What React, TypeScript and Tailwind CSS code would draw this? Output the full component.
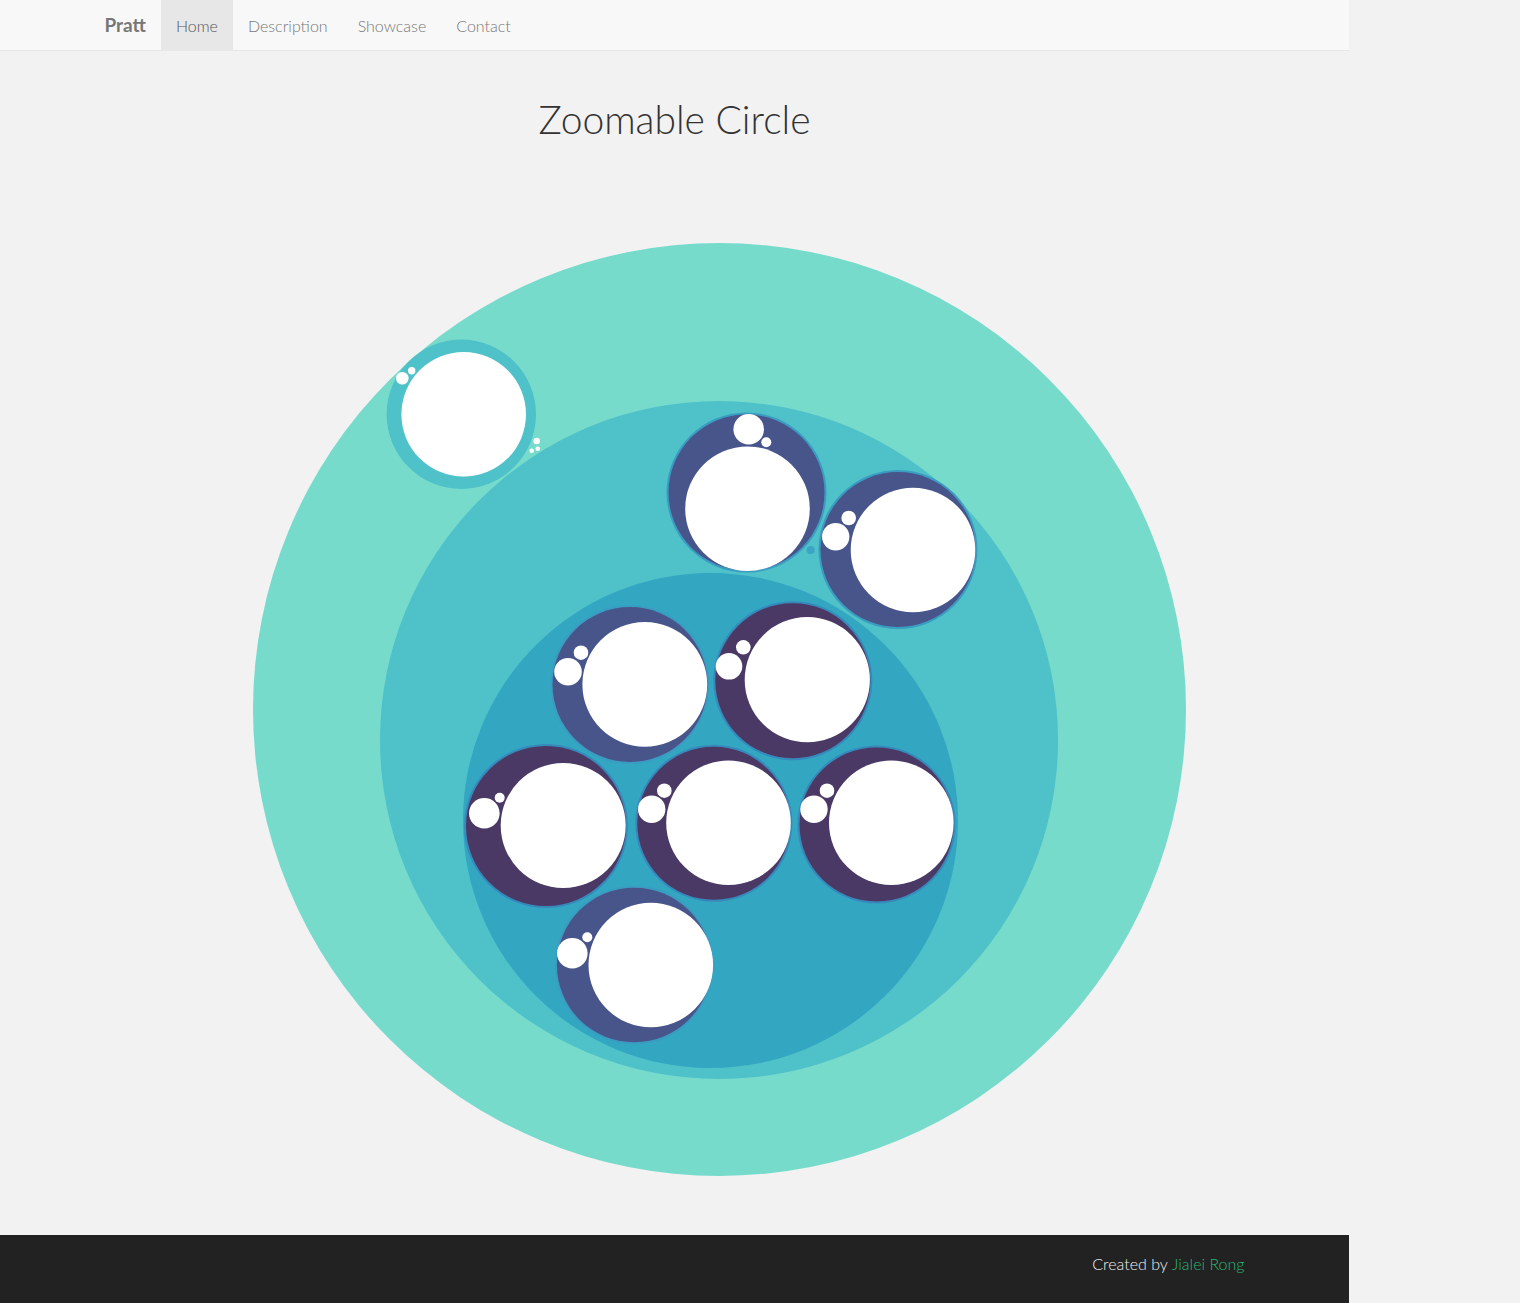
import React from "react";

type Dot = [number, number, number];
type Node = {
  c: [number, number];
  r: number;
  ring: number;
  fill: string;
  ringFill: string;
  dots: Dot[];
};

const NAVY = "#48558a";
const PURPLE = "#4a3965";
const RING_NAVY = "#3b9cc2";
const RING_PURPLE = "#3789bc";

const nodes: Node[] = [
  { c: [746.5, 492.5], r: 78, ring: 80, fill: NAVY, ringFill: RING_NAVY, dots: [[747.5, 508.7, 62.3], [748.7, 429.3, 15.3], [766.3, 442.3, 5]] },
  { c: [898, 549.5], r: 77.5, ring: 79.5, fill: NAVY, ringFill: RING_NAVY, dots: [[913, 550, 62.3], [835.7, 536.7, 13.7], [848.7, 518, 7.3]] },
  { c: [630, 684.5], r: 77.5, ring: 79.5, fill: NAVY, ringFill: RING_NAVY, dots: [[644.8, 684.4, 62.4], [568, 671.7, 13.8], [581, 652.7, 7.3]] },
  { c: [792.8, 680.7], r: 77.5, ring: 79.5, fill: PURPLE, ringFill: RING_PURPLE, dots: [[807.3, 679.7, 62.6], [729, 666.3, 13.3], [743.3, 647.3, 7.3]] },
  { c: [546, 826], r: 80, ring: 82, fill: PURPLE, ringFill: RING_PURPLE, dots: [[563.2, 825.5, 62.5], [484.3, 813.3, 15.3], [499.7, 797.7, 5]] },
  { c: [713.8, 823.3], r: 76.5, ring: 78.5, fill: PURPLE, ringFill: RING_PURPLE, dots: [[728.5, 822.8, 62.3], [651.7, 809.3, 13.7], [664.3, 790.7, 7.3]] },
  { c: [876.5, 824.5], r: 77, ring: 79, fill: PURPLE, ringFill: RING_PURPLE, dots: [[891.3, 822.8, 62.3], [814, 809.3, 13.7], [827, 790.7, 7.3]] },
  { c: [634.2, 965], r: 77.3, ring: 79.3, fill: NAVY, ringFill: RING_NAVY, dots: [[650.8, 965, 62.3], [572.3, 953.3, 15.3], [587.3, 937.3, 5]] },
];

function Chart() {
  return (
    <svg
      width={1349}
      height={1055}
      viewBox="0 180 1349 1055"
      className="block"
    >
      <circle cx={719.5} cy={709.5} r={466.5} fill="#77dbcc" />
      <circle cx={461.3} cy={414.3} r={74.7} fill="#4fc1c9" />
      <circle cx={463.7} cy={414.3} r={62.3} fill="#ffffff" />
      <circle cx={402.3} cy={378.3} r={6.3} fill="#ffffff" />
      <circle cx={411.7} cy={370.7} r={3.7} fill="#ffffff" />
      <circle cx={536.7} cy={441} r={3.3} fill="#ffffff" />
      <circle cx={531.7} cy={450.7} r={2.3} fill="#ffffff" />
      <circle cx={537.7} cy={448.7} r={2.3} fill="#ffffff" />
      <circle cx={719} cy={740} r={339} fill="#4fc1c9" />
      <circle cx={710.5} cy={820.5} r={247.5} fill="#33a6c1" />
      <circle cx={810.7} cy={550} r={4} fill="#3aa4c4" />
      {nodes.map((n, i) => (
        <g key={i}>
          <circle cx={n.c[0]} cy={n.c[1]} r={n.ring} fill={n.ringFill} />
          <circle cx={n.c[0]} cy={n.c[1]} r={n.r} fill={n.fill} />
          {n.dots.map((d, j) => (
            <circle key={j} cx={d[0]} cy={d[1]} r={d[2]} fill="#ffffff" />
          ))}
        </g>
      ))}
    </svg>
  );
}

export default function App() {
  const font = { fontFamily: "Lato, 'Open Sans', sans-serif" };
  return (
    <div className="min-h-[1303px] w-[1520px] bg-[#f2f2f2]" style={font}>
      <div className="w-[1349px]">
        <nav className="h-[51px] bg-[#f8f8f8] border-b border-[#e7e7e7]">
          <div className="mx-auto flex h-[50px] w-[1170px]">
            <div className="flex h-[50px] items-center px-[15px] text-[19px] font-bold text-[#777777]">
              Pratt
            </div>
            <div className="flex h-[50px] items-center bg-[#e7e7e7] px-[15px] pt-[2px] text-[16px] font-light text-[#555555]">
              Home
            </div>
            <div className="flex h-[50px] items-center px-[15px] pt-[2px] text-[16px] font-light text-[#777777]">
              Description
            </div>
            <div className="flex h-[50px] items-center px-[15px] pt-[2px] text-[16px] font-light text-[#777777]">
              Showcase
            </div>
            <div className="flex h-[50px] items-center px-[15px] pt-[2px] text-[16px] font-light text-[#777777]">
              Contact
            </div>
          </div>
        </nav>
        <div className="flex h-[129px] justify-center pt-[46px]">
          <h1 className="text-[39px] font-light leading-[44px] text-[#333333]">
            Zoomable Circle
          </h1>
        </div>
        <Chart />
        <footer className="h-[68px] bg-[#222222]">
          <div className="mx-auto flex w-[1170px] justify-end px-[15px] pt-[19px] text-[16px] font-light leading-[20px]">
            <span className="text-[#f0f0f0]">Created by&nbsp;</span>
            <span className="text-[#2db574]">Jialei Rong</span>
          </div>
        </footer>
      </div>
    </div>
  );
}
